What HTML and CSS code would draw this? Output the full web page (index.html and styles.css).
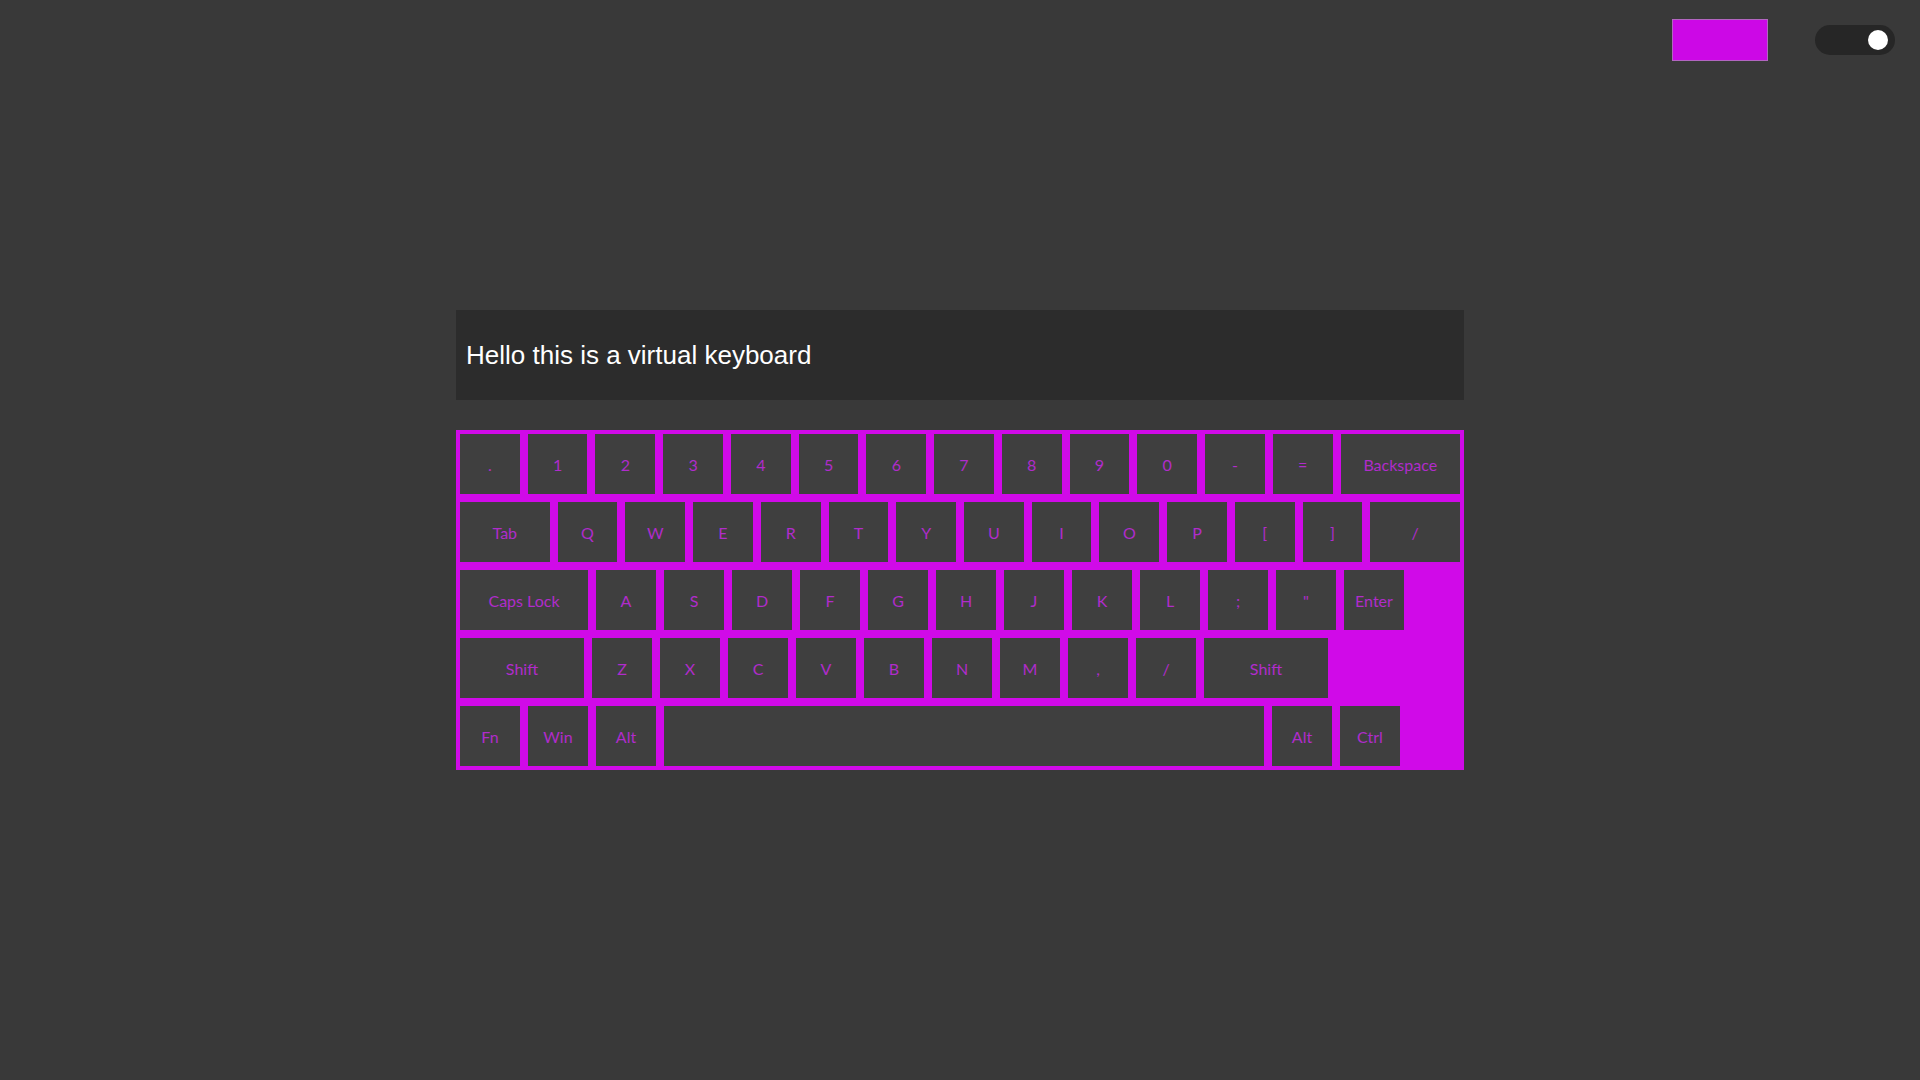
FILE: index.html
```html
<!DOCTYPE html>
<html lang="en">
<head>
<meta charset="utf-8">
<title>Virtual Keyboard</title>
<link rel="stylesheet" href="styles.css">
</head>
<body>
<header class="topbar">
  <button class="color-btn" aria-label="Color"></button>
  <div class="toggle"><span class="knob"></span></div>
</header>
<main class="main">
  <div class="display">Hello this is a virtual keyboard</div>
  <div class="keyboard">
    <div class="row">
      <div class="key">.</div><div class="key">1</div><div class="key">2</div><div class="key">3</div><div class="key">4</div><div class="key">5</div><div class="key">6</div><div class="key">7</div><div class="key">8</div><div class="key">9</div><div class="key">0</div><div class="key">-</div><div class="key">=</div><div class="key k-back">Backspace</div>
    </div>
    <div class="row">
      <div class="key k-tab">Tab</div><div class="key">Q</div><div class="key">W</div><div class="key">E</div><div class="key">R</div><div class="key">T</div><div class="key">Y</div><div class="key">U</div><div class="key">I</div><div class="key">O</div><div class="key">P</div><div class="key">[</div><div class="key">]</div><div class="key k-tab">/</div>
    </div>
    <div class="row">
      <div class="key k-caps">Caps Lock</div><div class="key">A</div><div class="key">S</div><div class="key">D</div><div class="key">F</div><div class="key">G</div><div class="key">H</div><div class="key">J</div><div class="key">K</div><div class="key">L</div><div class="key">;</div><div class="key">"</div><div class="key">Enter</div>
    </div>
    <div class="row">
      <div class="key k-shift">Shift</div><div class="key">Z</div><div class="key">X</div><div class="key">C</div><div class="key">V</div><div class="key">B</div><div class="key">N</div><div class="key">M</div><div class="key">,</div><div class="key">/</div><div class="key k-shift">Shift</div>
    </div>
    <div class="row">
      <div class="key">Fn</div><div class="key">Win</div><div class="key">Alt</div><div class="key k-space"></div><div class="key">Alt</div><div class="key">Ctrl</div>
    </div>
  </div>
</main>
<div class="bottom-spacer"></div>
</body>
</html>
```

FILE: styles.css
```css
* { box-sizing: border-box; }
html, body { margin: 0; padding: 0; }
body {
  background: #393939;
  min-height: 100vh;
  display: flex;
  flex-direction: column;
  font-family: "Liberation Sans", Arial, sans-serif;
}
.topbar {
  height: 80px;
  display: flex;
  justify-content: flex-end;
  align-items: center;
  gap: 47px;
  padding-right: 25px;
}
.color-btn {
  width: 96px;
  height: 42px;
  background: #cc08e6;
  border: 1px solid #b266c0;
  padding: 0;
  margin: 0;
}
.toggle {
  width: 80px;
  height: 30px;
  border-radius: 15px;
  background: #262626;
  display: flex;
  align-items: center;
  justify-content: flex-end;
  padding-right: 7px;
}
.knob {
  width: 20px;
  height: 20px;
  border-radius: 50%;
  background: #ffffff;
}
.main {
  flex: 1;
  display: flex;
  flex-direction: column;
  align-items: center;
  justify-content: center;
}
.bottom-spacer { height: 80px; }
.display {
  width: 1008px;
  height: 90px;
  background: #2c2c2c;
  color: #ffffff;
  font-size: 26px;
  display: flex;
  align-items: center;
  padding-left: 10px;
  margin-bottom: 30px;
}
.keyboard {
  width: 1008px;
  background: #d00ae8;
  display: flex;
  flex-direction: column;
}
.row {
  display: flex;
}
.key {
  width: 60px;
  height: 60px;
  margin: 4px;
  flex-shrink: 1;
  background: #3f3f3f;
  color: #b02ccb;
  font-family: Lato, "Noto Sans", sans-serif;
  font-size: 16px;
  display: flex;
  align-items: center;
  justify-content: center;
  white-space: nowrap;
}
.k-back { width: 120px; }
.k-tab { width: 90px; }
.k-caps { width: 128px; }
.k-shift { width: 124px; }
.k-space { width: 600px; }
```
